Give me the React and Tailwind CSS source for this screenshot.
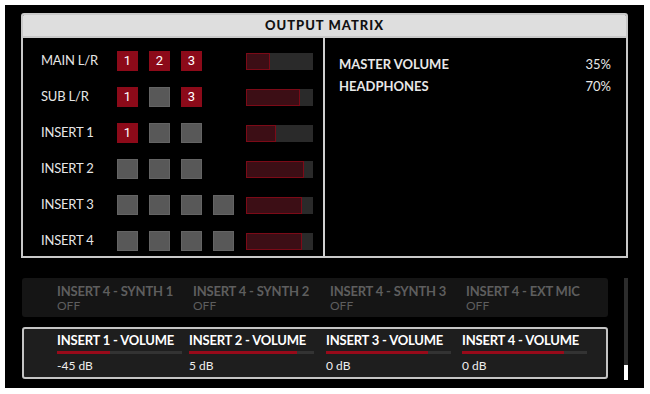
import React from "react";

const rows = [
  { label: "MAIN L/R", boxes: ["1", "2", "3"], fill: 24 },
  { label: "SUB L/R", boxes: ["1", null, "3"], fill: 54 },
  { label: "INSERT 1", boxes: ["1", null, null], fill: 30 },
  { label: "INSERT 2", boxes: [null, null, null], fill: 58 },
  { label: "INSERT 3", boxes: [null, null, null, null], fill: 56 },
  { label: "INSERT 4", boxes: [null, null, null, null], fill: 56 },
];

const offs = [
  { t: "INSERT 4 - SYNTH 1", w: "w-[136px]" },
  { t: "INSERT 4 - SYNTH 2", w: "w-[137px]" },
  { t: "INSERT 4 - SYNTH 3", w: "w-[136px]" },
  { t: "INSERT 4 - EXT MIC", w: "w-[136px]" },
];

const vols = [
  { t: "INSERT 1 - VOLUME", v: "-45 dB", f: 53, w: "w-[132px]" },
  { t: "INSERT 2 - VOLUME", v: "5 dB", f: 108, w: "w-[137px]" },
  { t: "INSERT 3 - VOLUME", v: "0 dB", f: 102, w: "w-[136px]" },
  { t: "INSERT 4 - VOLUME", v: "0 dB", f: 102, w: "w-[136px]" },
];

export default function App() {
  return (
    <div
      className="w-[650px] h-[394px] bg-white pl-[5px] pt-[5px]"
      style={{ fontFamily: "Lato, 'Open Sans', sans-serif" }}
    >
      <div className="w-[639px] h-[383px] bg-black flex flex-col pl-[16px] pt-[8px]">
        {/* Panel */}
        <div className="w-[607px] h-[245px] flex flex-col rounded-t-[3px] border-2 border-[#c9c9c9] overflow-hidden">
          <div className="h-[23px] shrink-0 bg-[#dedede] border-b-2 border-[#c9c9c9] flex items-center justify-center text-[13px] font-black tracking-[1px] text-[#111]">
            OUTPUT MATRIX
          </div>
          <div className="flex flex-1 min-h-0">
            <div className="w-[302px] border-r-2 border-[#d0d0d0] pt-[5px] pl-[18px] flex flex-col overflow-hidden">
              {rows.map((r) => (
                <div key={r.label} className="h-[36px] shrink-0 flex items-center">
                  <div className="w-[76px] text-[13px] text-[#e6e6e6] tracking-[-0.2px]">
                    {r.label}
                  </div>
                  <div className="w-[129px] flex gap-[11px]">
                    {r.boxes.map((b, i) =>
                      b ? (
                        <div
                          key={i}
                          className="w-[21px] h-[20px] bg-[#8c0a19] flex items-center justify-center text-[13px] text-white"
                          style={{ fontFamily: "Roboto, sans-serif" }}
                        >
                          {b}
                        </div>
                      ) : (
                        <div
                          key={i}
                          className="w-[21px] h-[20px] bg-[#585858] border border-[#646464]"
                        />
                      )
                    )}
                  </div>
                  <div className="w-[67px] h-[17px] bg-[#2a2a2a]">
                    <div
                      className="h-full bg-[#3c0e15] border border-[#7c0a17]"
                      style={{ width: r.fill }}
                    />
                  </div>
                </div>
              ))}
            </div>
            <div className="flex-1 pl-[14px] pr-[15px] pt-[16px] text-[13px] text-[#e8e8e8]">
              <div className="h-[22px] flex items-center justify-between">
                <span className="font-bold">MASTER VOLUME</span>
                <span>35%</span>
              </div>
              <div className="h-[22px] flex items-center justify-between">
                <span className="font-bold">HEADPHONES</span>
                <span>70%</span>
              </div>
            </div>
          </div>
        </div>

        {/* Bottom area */}
        <div className="flex mt-[20px]">
          <div className="w-[587px] flex flex-col gap-[10px] pl-[1px]">
            <div className="h-[39px] bg-[#151515] rounded-[3px] pl-[35px] flex items-center">
              {offs.map((o) => (
                <div key={o.t} className={`${o.w} flex flex-col text-[#5e5e5e]`}>
                  <div className="text-[13px] font-bold leading-[15px] tracking-[-0.2px]">{o.t}</div>
                  <div className="text-[12px] leading-[13px]">OFF</div>
                </div>
              ))}
            </div>
            <div className="h-[52px] bg-[#1e1e1e] rounded-[3px] border-2 border-[#c4c4c4] pl-[33px] flex items-center">
              {vols.map((o) => (
                <div key={o.t} className={`${o.w} flex flex-col`}>
                  <div className="text-[13px] font-bold leading-[14px] text-white tracking-[-0.2px]">{o.t}</div>
                  <div className="w-[125px] h-[3px] bg-[#333] mt-[4px]">
                    <div className="h-full bg-[#980a1a]" style={{ width: o.f }} />
                  </div>
                  <div className="text-[12px] leading-[14px] mt-[5px] text-[#eee]">{o.v}</div>
                </div>
              ))}
            </div>
          </div>
          <div className="ml-[16px] w-[4px] h-[102px] bg-[#2c2c2c] flex flex-col justify-end">
            <div className="h-[15px] bg-white" />
          </div>
        </div>
      </div>
    </div>
  );
}
